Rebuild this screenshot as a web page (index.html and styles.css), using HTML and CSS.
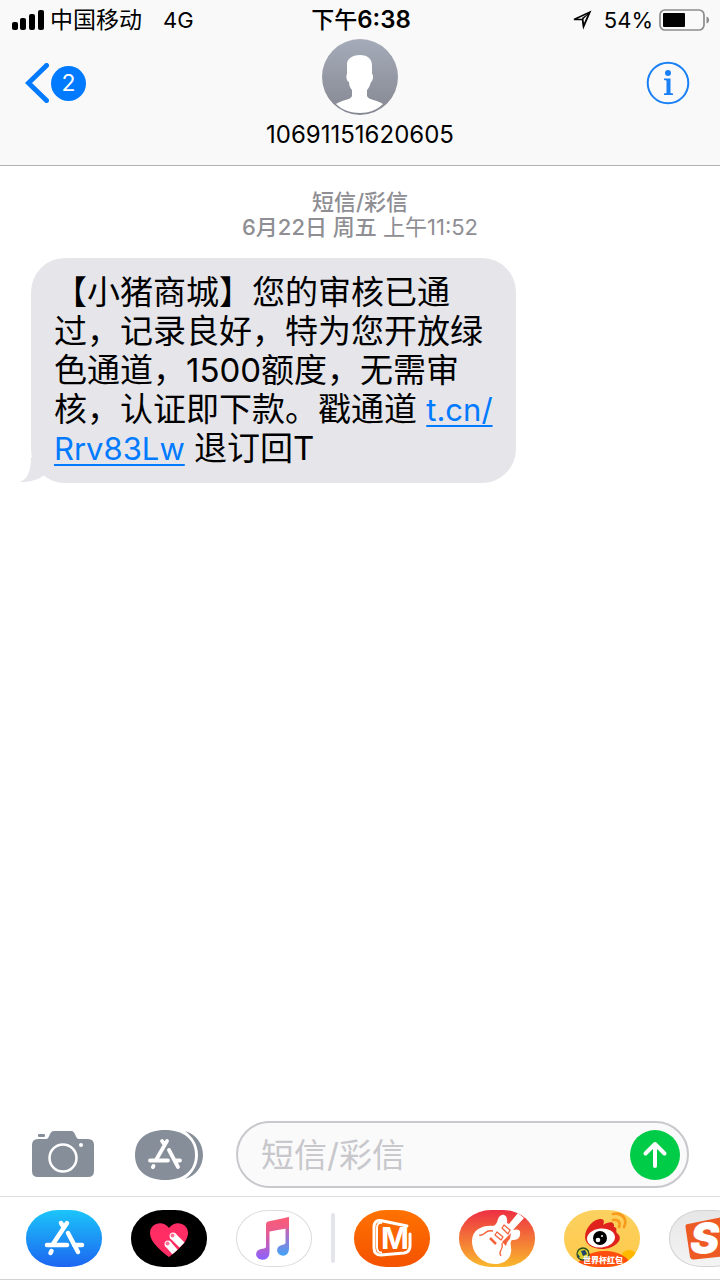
FILE: index.html
```html
<!DOCTYPE html>
<html lang="zh-CN">
<head>
  <meta charset="UTF-8" />
  <meta name="viewport" content="width=device-width, initial-scale=1.0"/>
  <title>10691151620605</title>
  <link rel="stylesheet" href="styles.css">
</head>

<body>
<div class="phone">
  <header class="header">
    <!-- Status bar -->
    <div class="status">
      <div class="status-left">
        <svg width="32" height="20" viewBox="0 0 32 20">
          <rect x="0" y="12" width="6" height="8" rx="2"/>
          <rect x="8" y="8" width="6" height="12" rx="2"/>
          <rect x="17" y="4" width="6" height="16" rx="2"/>
          <rect x="26" y="0" width="6" height="20" rx="2"/>
        </svg>
        <span>中国移动</span>
        <span class="network">4G</span>
      </div>
      <div class="status-time">下午<b>6:38</b></div>
      <div class="status-right">
        <svg width="20" height="20" viewBox="0 0 20 20">
          <path d="M2 9.5 L18 2 L11.500 17 L10.500 9.500 Z" fill="none" stroke="#000" stroke-width="1.500"/>
          <path d="M18 2 L10 8 L11 17 Z"/>
          <path d="M15.500 5 L11.500 9 L12 13 Z" fill="#f9f9f9"/>
        </svg>
        <span class="percent">54%</span>
        <svg width="51" height="22" viewBox="0 0 51 22">
          <rect x="1" y="1" width="44" height="20" rx="5" fill="none" stroke="#8c8c8c" stroke-width="1.7"/>
          <rect x="4" y="4" width="22" height="14" rx="1"/>
          <path d="M47.5 7.5 C51 8.5 51 13.500 47.500 14.500 Z" fill="#8c8c8c"/>
        </svg>
      </div>
    </div>

    <!-- Conversation bar -->
    <nav class="nav">
      <button class="back" aria-label="返回">
        <svg width="24" height="40" viewBox="0 0 24 40">
          <path d="M21.500 2.500 L3.500 20 L21.500 37.500" fill="none" stroke="#007aff" stroke-width="5" stroke-linecap="round" stroke-linejoin="miter"/>
        </svg>
        <span class="unread">2</span>
      </button>
      <div class="contact">
        <svg width="76" height="76" viewBox="0 0 76 76">
          <defs>
            <linearGradient id="avatarBg" x1="0" y1="0" x2="0" y2="1">
              <stop offset="0" stop-color="#a5abb9"/>
              <stop offset="1" stop-color="#858891"/>
            </linearGradient>
          </defs>
          <circle cx="38" cy="38" r="38" fill="url(#avatarBg)"/>
          <path fill="#fff" d="M38 16 C46 16 50 20 50 27 L50 35 C52 36 51 42 49 43 C48 46 47 49 45 51 L45 57 C46 61 56 61 61 65 C55 71 47 74 38 74 C29 74 20 71 14 65 C19 61 29 61 30 57 L30 51 C28 49 27 46 27 43 C24 42 24 36 25 35 L25 27 C24 20 30 16 38 16 Z"/>
        </svg>
        <span class="name">10691151620605</span>
      </div>
      <button class="info" aria-label="详细信息">
        <svg width="44" height="44" viewBox="0 0 44 44">
          <circle cx="22" cy="22" r="20.300" fill="none" stroke="#1a80f5" stroke-width="2"/>
          <circle cx="22" cy="12" r="3" fill="#1a80f5"/>
          <path fill="#1a80f5" d="M18 17.500 H24.500 V32 L27 32.500 V34 H18 V32.500 L20.500 32 V19.500 L18 19 Z"/>
        </svg>
      </button>
    </nav>
  </header>

  <!-- Messages -->
  <main class="messages">
    <div class="stamp">
      <div><b>短信/彩信</b></div>
      <div><b>6月22日 周五</b> 上午11:52</div>
    </div>
    <div class="bubble">
      【小猪商城】您的审核已通过，记录良好，特为您开放绿色通道，1500额度，无需审核，认证即下款。戳通道 <a href="#">t.cn/<wbr>Rrv83Lw</a> 退订回T
      <svg class="tail" width="30" height="26" viewBox="0 0 30 26">
        <path fill="#e5e5ea" d="M11 0 C11 13 8 22 0 25 C9 25 17 23 23 19 L30 8 Z"/>
      </svg>
    </div>
  </main>

  <!-- Message input -->
  <form class="composer">
    <div class="tools">
      <button type="button" class="tool" aria-label="相机">
        <svg width="62" height="48" viewBox="0 0 62 48">
          <rect x="6" y="3" width="7" height="3" rx="1" fill="#868e99"/>
          <path fill="#868e99" d="M6 8 H14 C18 8 17 0 22 0 H39 C44 0 43 8 47 8 H56 Q62 8 62 14 V40 Q62 46 56 46 H6 Q0 46 0 40 V14 Q0 8 6 8 Z"/>
          <circle cx="31" cy="27" r="13.500" fill="none" stroke="#fff" stroke-width="2.500"/>
          <circle cx="49" cy="14" r="2" fill="#fff"/>
        </svg>
      </button>
      <button type="button" class="tool" aria-label="App">
        <svg width="68" height="50" viewBox="0 0 68 50">
          <path fill="#868e99" d="M50 1 C61 4 68 14 68 25 C68 36 61 46 50 49 C58 43 63 35 63 25 C63 15 58 7 50 1 Z"/>
          <path fill="#868e99" d="M30 0 C48 0 60 9 60 25 C60 41 48 50 30 50 C12 50 0 41 0 25 C0 9 12 0 30 0 Z"/>
          <g fill="none" stroke="#fff" stroke-width="3.800" stroke-linecap="round">
            <path d="M27 11 L29 14 M32 11 L21 30 M34 20 L43 37 M15 30.500 H33 M40 30.500 H45 M18.500 36 L17.800 37.200"/>
          </g>
        </svg>
      </button>
    </div>
    <div class="field">
      <input type="text" placeholder="短信/彩信" aria-label="短信/彩信">
      <button class="send" aria-label="发送">
        <svg width="26" height="28" viewBox="0 0 26 28">
          <path d="M13 25 V3 M3.500 12.500 L13 3 L22.500 12.500" fill="none" stroke="#fff" stroke-width="4" stroke-linecap="round" stroke-linejoin="round"/>
        </svg>
      </button>
    </div>
  </form>

  <!-- App drawer -->
  <div class="apps">
    <button class="app app-store" aria-label="App Store">
      <svg viewBox="0 0 76 57">
        <path d="M35 13 L37.500 17 M41 13 L27 34 M42 23 L52 42 M21 35 H41 M48 35 H56 M25.500 41 L24.500 43" fill="none" stroke="#fff" stroke-width="4.500" stroke-linecap="round"/>
      </svg>
    </button>
    <button class="app app-touch" aria-label="Digital Touch">
      <svg viewBox="0 0 76 57">
        <path fill="#ff2d64" d="M38 47 C33 43 19 33 19 23 C19 12 33 10 38 18 C43 10 57 12 57 23 C57 33 43 43 38 47 Z"/>
        <g stroke="#fff" stroke-width="7">
          <path d="M42 26 L51 35"/>
          <path d="M37 34 L44 42"/>
        </g>
        <circle cx="42" cy="26" r="3.500" fill="#fff"/>
        <circle cx="37" cy="34" r="3.500" fill="#fff"/>
        <circle cx="41.500" cy="25.500" r="2" fill="#ff6f94"/>
        <circle cx="36.500" cy="33.500" r="2" fill="#ff6f94"/>
      </svg>
    </button>
    <button class="app app-music" aria-label="音乐">
      <svg viewBox="0 0 76 57">
        <defs>
          <linearGradient id="noteTop" x1="0" y1="0" x2="0" y2="1">
            <stop offset="0" stop-color="#fb5c74"/>
            <stop offset="0.350" stop-color="#e85c90"/>
            <stop offset="1" stop-color="#8a62ff"/>
          </linearGradient>
          <linearGradient id="noteRight" x1="0" y1="0" x2="0" y2="1">
            <stop offset="0" stop-color="#fb5c74"/>
            <stop offset="0.450" stop-color="#b06cc8"/>
            <stop offset="1" stop-color="#40a5fa"/>
          </linearGradient>
        </defs>
        <path fill="url(#noteRight)" d="M49.500 8 L53 7 V38 C53 46 47 46 46 45.500 C39 44 40 36 46 35 C49 34.500 49.500 34 49.500 32 Z"/>
        <path fill="url(#noteTop)" d="M30 14 Q30 12 32 11.500 L51 7.500 Q53 7 53 9 V18 L33.500 21.500 V42 C33.500 50 27 50 25 49.500 C18 48 19 40 25 39 C30 38.500 30 38 30 35 Z"/>
      </svg>
    </button>
    <div class="divider"></div>
    <button class="app app-mango" aria-label="芒果TV">
      <svg viewBox="0 0 76 57">
        <path d="M53 16 L29 11 Q20 9 20 17 V38 Q20 45 27 45 L50 43 Q56 42 56 36 V24" fill="none" stroke="#fff" stroke-width="3" stroke-linecap="round" stroke-linejoin="round"/>
        <path d="M28 13 Q23 12 23 18 V37 Q23 43 28 42.500" fill="none" stroke="#fff" stroke-width="2"/>
        <text class="mango-mark" x="27" y="39">M</text>
      </svg>
    </button>
    <button class="app app-band" aria-label="库乐队">
      <svg viewBox="0 0 76 57">
        <path fill="#fff" d="M34 16 C39 15 38 8 41 6 C45 3 49 6 48 13 L50 14 L59 3 L65 8 L54 20 C58 19 62 19 61 24 C61 29 57 30 53 30 C50 33 53 38 52 42 C51 50 44 54 36 54 C23 54 13 43 13 31 C13 19 25 15 34 16 Z"/>
        <g fill="none" stroke="#f4623a" stroke-width="1.300" stroke-linejoin="round">
          <path d="M20 25 Q23 26 26 23 T34 21"/>
          <path d="M42 46 Q40 43 42 40 T43 33"/>
          <path d="M45 15 L51 20 L49 24 L43 18 Z"/>
          <path d="M38 22 L44 27 L42 30 L36 25 Z"/>
        </g>
        <path d="M31 28 L37 34" stroke="#f4623a" stroke-width="2.500"/>
        <path fill="#f4623a" d="M52 23 L51 29 Q48 31 47 36 L43 32 Z"/>
      </svg>
    </button>
    <button class="app app-weibo" aria-label="微博">
      <svg viewBox="0 0 76 57">
        <circle cx="65" cy="48" r="8" fill="#ffb800"/>
        <path fill="#ff4d0d" d="M10 57 C18 47 28 40 43 41 C56 42 64 47 69 57 Z"/>
        <path fill="#e0221c" d="M21 27 C21 17 31 8 37 9 C41 9 40 13 39 15 C45 11 51 11 50 17 C55 18 50 21 54 24 C60 30 50 39 38 39 C28 39 21 34 21 27 Z"/>
        <ellipse cx="37" cy="28" rx="14" ry="9.500" fill="#fff" transform="rotate(-6 37 28)"/>
        <circle cx="36" cy="28" r="7" fill="#000"/>
        <circle cx="34" cy="30" r="2.300" fill="#fff"/>
        <circle cx="38" cy="26" r="1" fill="#fff"/>
        <path d="M49 10 C54 9 57 12 55 17 M49 4 C58 2 64 9 60 17" fill="none" stroke="#f99b1c" stroke-width="2.800" stroke-linecap="round"/>
        <circle cx="19" cy="44" r="6" fill="#d9cf2b" stroke="#2b4c22" stroke-width="1.300"/>
        <path fill="#20436a" d="M17 41 L21 40 L23 44 L19 46 Z M14 44 L16 47 L14 48 Z M20 48 L23 47 L21 50 Z"/>
        <text class="weibo-text" x="19" y="53">世界杯红包</text>
      </svg>
    </button>
    <button class="app app-sogou" aria-label="搜狗输入法">
      <svg viewBox="0 0 76 57">
        <path fill="#ee5a23" d="M19 14 Q16 14 16.500 17 L21 47 Q22 50 25 49.500 L58 46 L54 7 Z"/>
        <text class="sogou-mark" x="21" y="44">S</text>
      </svg>
    </button>
  </div>
</div>
</body>
</html>
```
FILE: styles.css
```css
/* Reset default margins */
body, html {
  margin: 0;
  padding: 0;
}

body {
  font-family: Inter, "Noto Sans CJK SC", sans-serif;
  color: #000;
  background-color: #fff;
}

button {
  margin: 0;
  padding: 0;
  border: none;
  background: none;
  font-family: inherit;
  cursor: pointer;
}

svg {
  display: block;
  flex-shrink: 0;
}

.phone {
  min-height: 100vh;
  display: flex;
  flex-direction: column;
  overflow: hidden;
}

/* Header */
.header {
  background-color: #f9f9f9;
  border-bottom: 1px solid #b2b2b2;
}
.status {
  display: grid;
  grid-template-columns: 1fr auto 1fr;
  align-items: center;
  padding: 1px 10px 0 12px;
  font-size: 23px;
  line-height: 38px;
}
.status-left,
.status-right {
  display: flex;
  align-items: center;
}
.status-left span {
  margin-left: 6px;
}
.status-left .network {
  margin-left: 21px;
  font-size: 22px;
}
.status-time {
  font-weight: 500;
}
.status-time b {
  font-weight: 600;
  font-size: 24px;
}
.status-right {
  justify-content: flex-end;
}
.percent {
  margin: 0 6px 0 12px;
  font-size: 22px;
}

.nav {
  display: grid;
  grid-template-columns: 1fr auto 1fr;
  align-items: start;
  padding: 0 25px 10px;
}
.back,
.info {
  display: flex;
  align-items: center;
  height: 88px;
}
.back {
  justify-self: start;
  gap: 2px;
}
.info {
  justify-self: end;
  margin-right: 5px;
}
.unread {
  width: 35px;
  height: 35px;
  border-radius: 50%;
  background-color: #007aff;
  color: #fff;
  font-size: 23px;
  line-height: 35px;
}
.contact {
  display: flex;
  flex-direction: column;
  align-items: center;
}
.name {
  font-size: 24px;
  line-height: 40px;
}

/* Messages */
.messages {
  flex: 1;
  padding: 24px 31px;
}
.stamp {
  color: #8e8e93;
  font-size: 22px;
  line-height: 25px;
  text-align: center;
}
.stamp b {
  font-weight: 500;
}
.bubble {
  position: relative;
  box-sizing: border-box;
  width: fit-content;
  max-width: 485px;
  margin-top: 18px;
  padding: 15px 14px 15px 23px;
  border-radius: 34px;
  background-color: #e5e5ea;
  font-size: 33px;
  line-height: 39px;
}
.bubble a {
  color: #007aff;
  font-size: 31px;
  text-decoration-thickness: 2px;
  text-underline-offset: 4px;
}
.tail {
  position: absolute;
  left: -11px;
  bottom: 0;
}

/* Composer */
.composer {
  display: flex;
  align-items: center;
  padding: 8px 31px 8px 32px;
}
.tools {
  display: flex;
  align-items: center;
  gap: 41px;
  margin-right: 33px;
}
.field {
  flex: 1;
  min-width: 0;
  display: flex;
  align-items: center;
  box-sizing: border-box;
  height: 67px;
  padding: 0 7px 0 23px;
  border: 2px solid #c8c8cd;
  border-radius: 34px;
  background-color: #fafafa;
}
.field input {
  flex: 1;
  min-width: 0;
  padding: 0;
  border: none;
  outline: none;
  background: none;
  font-family: inherit;
  font-size: 33px;
  font-weight: 400;
}
.field input::placeholder {
  color: #c7c7cc;
  opacity: 1;
}
.send {
  display: flex;
  align-items: center;
  justify-content: center;
  width: 50px;
  height: 50px;
  border-radius: 50%;
  background-color: #00cc47;
}

/* App drawer */
.apps {
  display: flex;
  align-items: center;
  gap: 29px;
  height: 82px;
  padding-left: 26px;
  border-top: 1px solid #dedede;
  border-bottom: 1px solid #d2d2d2;
  overflow: hidden;
}
.app {
  flex: 0 0 76px;
  height: 57px;
  border-radius: 32px / 28px;
  overflow: hidden;
}
.app svg {
  width: 76px;
  height: 57px;
}
.divider {
  flex: 0 0 4px;
  height: 50px;
  margin: 0 -10px;
  border-radius: 2px;
  background-color: #e4e4eb;
}
.app-store {
  background: linear-gradient(#1bc5fa, #1d65f1);
}
.app-touch {
  background-color: #000;
}
.app-music {
  background-color: #fff;
  box-shadow: inset 0 0 0 1px #dcdcdf;
}
.app-mango {
  background: linear-gradient(#ff7200, #f45200);
}
.app-band {
  background: linear-gradient(#ee2f44, #f9b92c);
}
.app-weibo {
  background: linear-gradient(#fbd160, #ffc94a);
}
.app-sogou {
  background: linear-gradient(#e6e6e6, #f4f4f4);
  box-shadow: inset 0 0 0 1px #d4d4d4;
}
.mango-mark {
  font-family: Inter, sans-serif;
  font-size: 30px;
  font-weight: 700;
  fill: #fff;
}
.weibo-text {
  font-family: "Noto Sans CJK SC", sans-serif;
  font-size: 8px;
  font-weight: 900;
  fill: #fff;
}
.sogou-mark {
  font-family: Inter, sans-serif;
  font-size: 44px;
  font-weight: 900;
  font-style: italic;
  fill: #fff;
}
```
